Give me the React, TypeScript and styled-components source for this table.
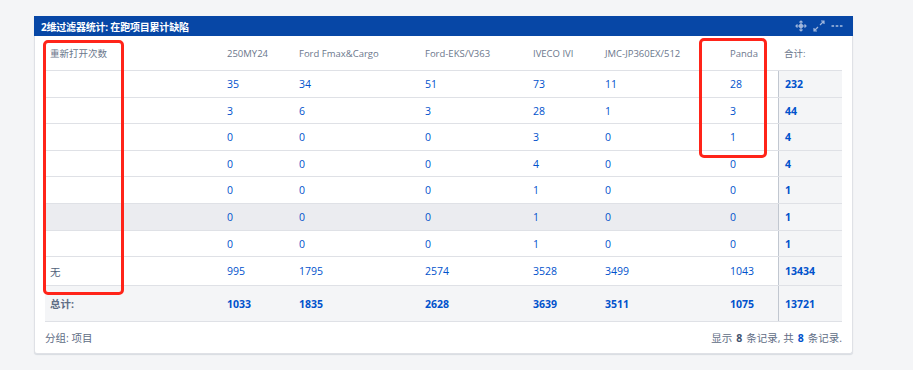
import React from 'react';
import styled, { createGlobalStyle } from 'styled-components';

const GlobalStyle = createGlobalStyle`
  html, body {
    margin: 0;
    padding: 0;
    background: #f4f5f7;
    font-family: "Open Sans", "Noto Sans CJK SC", sans-serif;
  }
`;

const Page = styled.div`
  position: relative;
  width: 913px;
  height: 370px;
  padding: 16px 0 0 34px;
  box-sizing: border-box;
`;

const Gadget = styled.div`
  width: 819px;
  background: #ffffff;
  border: 1px solid #dfe1e6;
  border-top: none;
  border-radius: 0 0 3px 3px;
  box-shadow: 0 1px 1px rgba(9, 30, 66, 0.12);
  box-sizing: border-box;
`;

const TitleBar = styled.div`
  height: 20px;
  margin: 0 -1px;
  background: #0747a6;
  display: flex;
  align-items: center;
  justify-content: space-between;
  padding: 0 10px 0 7px;
`;

const Title = styled.span`
  color: #ffffff;
  font-size: 10px;
  font-weight: 700;
  letter-spacing: -0.2px;
`;

const Tools = styled.div`
  display: flex;
  align-items: center;
  gap: 6px;
`;

const Body = styled.div`
  padding: 0 10px;
`;

const cols = '177px 72px 126px 108px 72px 125px 53px 64px';

const Row = styled.div<{ $h: number; $bg?: string }>`
  display: grid;
  grid-template-columns: ${cols};
  height: ${(p) => p.$h}px;
  background: ${(p) => p.$bg || 'transparent'};
  border-bottom: 1px solid #dfe1e6;
  box-sizing: border-box;
`;

const Cell = styled.div<{ $kind?: 'head' | 'label' | 'num' | 'total' | 'totalLabel' }>`
  display: flex;
  align-items: center;
  padding-left: 5px;
  font-size: ${(p) => (p.$kind === 'head' ? '9.5px' : '10.5px')};
  font-weight: ${(p) => (p.$kind === 'total' || p.$kind === 'totalLabel' ? 700 : 400)};
  color: ${(p) =>
    p.$kind === 'head'
      ? '#6b778c'
      : p.$kind === 'label'
      ? '#505f79'
      : p.$kind === 'totalLabel'
      ? '#5e6c84'
      : '#0052cc'};
  white-space: nowrap;
`;

const SumCell = styled(Cell)<{ $plain?: boolean }>`
  padding-left: 6px;
  background: ${(p) => (p.$plain ? 'transparent' : '#f4f5f7')};
  border-left: ${(p) => (p.$plain ? 'none' : '1px solid #c1c7d0')};
  font-weight: ${(p) => (p.$plain ? 400 : 700)};
`;

const Footer = styled.div`
  height: 31px;
  display: flex;
  align-items: center;
  justify-content: space-between;
  font-size: 10.5px;
  color: #5e6c84;
`;

const Strong = styled.b<{ $blue?: boolean }>`
  color: ${(p) => (p.$blue ? '#0052cc' : '#42526e')};
  margin: 0 4px;
`;

const Mark = styled.div<{ $l: number; $t: number; $w: number; $h: number }>`
  position: absolute;
  left: ${(p) => p.$l}px;
  top: ${(p) => p.$t}px;
  width: ${(p) => p.$w}px;
  height: ${(p) => p.$h}px;
  border: 3px solid #ff2419;
  border-radius: 5px;
  box-sizing: border-box;
  pointer-events: none;
`;

const MoveIcon = () => (
  <svg width="12" height="12" viewBox="0 0 12 12" fill="none" stroke="#9fb6dc" strokeWidth="1.2">
    <path d="M6 1v10M1 6h10" />
    <path d="M4.5 2.5L6 1l1.5 1.5M4.5 9.5L6 11l1.5-1.5M2.5 4.5L1 6l1.5 1.5M9.5 4.5L11 6l-1.5 1.5" />
    <circle cx="6" cy="6" r="1.6" fill="#9fb6dc" />
  </svg>
);

const ExpandIcon = () => (
  <svg width="12" height="12" viewBox="0 0 12 12" fill="none" stroke="#9fb6dc" strokeWidth="1.2">
    <path d="M7 5l4-4M8 1h3v3M5 7l-4 4M1 8v3h3" />
  </svg>
);

const MoreIcon = () => (
  <svg width="12" height="12" viewBox="0 0 12 12" fill="#9fb6dc">
    <rect x="0.5" y="5.2" width="2.6" height="1.6" />
    <rect x="4.7" y="5.2" width="2.6" height="1.6" />
    <rect x="8.9" y="5.2" width="2.6" height="1.6" />
  </svg>
);

const headers = ['250MY24', 'Ford Fmax&Cargo', 'Ford-EKS/V363', 'IVECO IVI', 'JMC-JP360EX/512', 'Panda'];

const rows = [
  { label: '', vals: [35, 34, 51, 73, 11, 28], sum: 232 },
  { label: '', vals: [3, 6, 3, 28, 1, 3], sum: 44 },
  { label: '', vals: [0, 0, 0, 3, 0, 1], sum: 4 },
  { label: '', vals: [0, 0, 0, 4, 0, 0], sum: 4 },
  { label: '', vals: [0, 0, 0, 1, 0, 0], sum: 1 },
  { label: '', vals: [0, 0, 0, 1, 0, 0], sum: 1, hover: true },
  { label: '', vals: [0, 0, 0, 1, 0, 0], sum: 1 },
  { label: '无', vals: [995, 1795, 2574, 3528, 3499, 1043], sum: 13434, tall: true },
];

const totals = [1033, 1835, 2628, 3639, 3511, 1075];
const rowHeights = [27, 26, 27, 26, 27, 27, 26];

export default function App() {
  return (
    <>
      <GlobalStyle />
      <Page>
        <Gadget>
          <TitleBar>
            <Title>2维过滤器统计: 在跑项目累计缺陷</Title>
            <Tools>
              <MoveIcon />
              <ExpandIcon />
              <MoreIcon />
            </Tools>
          </TitleBar>
          <Body>
            <Row $h={35}>
              <Cell $kind="head">重新打开次数</Cell>
              {headers.map((h) => (
                <Cell key={h} $kind="head">{h}</Cell>
              ))}
              <SumCell $kind="head" $plain>合计:</SumCell>
            </Row>
            {rows.map((r, i) => (
              <Row key={i} $h={r.tall ? 29 : rowHeights[i]} $bg={r.hover ? '#ebecf0' : undefined}>
                <Cell $kind="label">{r.label}</Cell>
                {r.vals.map((v, j) => (
                  <Cell key={j} $kind="num">{v}</Cell>
                ))}
                <SumCell $kind="total">{r.sum}</SumCell>
              </Row>
            ))}
            <Row $h={36} $bg="#f4f5f7">
              <Cell $kind="totalLabel">总计:</Cell>
              {totals.map((v, j) => (
                <Cell key={j} $kind="total">{v}</Cell>
              ))}
              <SumCell $kind="total">13721</SumCell>
            </Row>
            <Footer>
              <span>分组: 项目</span>
              <span>
                显示<Strong>8</Strong>条记录, 共<Strong $blue>8</Strong>条记录.
              </span>
            </Footer>
          </Body>
        </Gadget>
        <Mark $l={43} $t={40} $w={81} $h={255} />
        <Mark $l={699} $t={38} $w={68} $h={120} />
      </Page>
    </>
  );
}
